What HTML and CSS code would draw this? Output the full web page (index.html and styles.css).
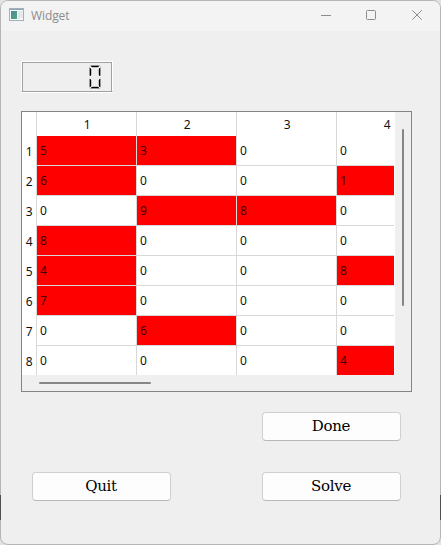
FILE: index.html
```
<!DOCTYPE html>
<html lang="en">
<head>
<meta charset="utf-8">
<title>Widget</title>
<link rel="stylesheet" href="styles.css">
</head>
<body>
<div class="backdrop">
<div class="window">
  <header class="titlebar">
    <svg class="app-icon" width="16" height="14" viewBox="0 0 16 14">
      <defs><linearGradient id="g" x1="0" y1="0" x2="1" y2="1"><stop offset="0" stop-color="#4b8a9c"/><stop offset="1" stop-color="#52a480"/></linearGradient></defs>
      <rect x=".5" y=".5" width="14" height="12" fill="#f8fafa" stroke="#a3b0b8"/>
      <path d="M1 1h13v1H1z" fill="#8ba5b6"/>
      <path d="M2 3h6v8H2z" fill="url(#g)"/>
      <path d="M9 3h2v8H9z" fill="#dce6e8"/><path d="M11 3h3v7h-3z" fill="#e4e9ec"/>
    </svg>
    <h1 class="title">Widget</h1>
    <svg class="controls" width="104" height="12" viewBox="0 0 104 12" fill="none" stroke="#8c8c8c">
      <path d="M0 6.5h10"/>
      <rect x="45.5" y="1.5" width="9" height="9" rx="1"/>
      <path d="M91.3 1.3l9.4 9.4M100.7 1.3l-9.4 9.4"/>
    </svg>
  </header>
  <main class="content">
    <div class="lcd">
      <svg width="12" height="24" viewBox="0 0 12 24">
        <path d="M1 .5h10M.5 1.5v9M.5 13.5v9M11.5 1.5v9M11.5 13.5v9M1 23.5h10" stroke="#bbb" fill="none"/>
        <path d="M2 1h8l-1 1H3zM3 22h6l1 1H2zM1 3l1 1v6l-1 1zM11 3l-1 1v6l1 1zM1 14l1 1v6l-1 1zM11 14l-1 1v6l1 1z" fill="#000" stroke="#000" stroke-width=".4"/>
      </svg>
    </div>
    <div class="table-frame">
      <div class="viewport">
        <table class="grid">
          <thead><tr><th class="rh"></th><th>1</th><th>2</th><th>3</th><th>4</th></tr></thead>
          <tbody>
            <tr><th class="rh">1</th><td class="fixed">5</td><td class="fixed">3</td><td>0</td><td>0</td></tr>
            <tr><th class="rh">2</th><td class="fixed">6</td><td>0</td><td>0</td><td class="fixed">1</td></tr>
            <tr><th class="rh">3</th><td>0</td><td class="fixed">9</td><td class="fixed">8</td><td>0</td></tr>
            <tr><th class="rh">4</th><td class="fixed">8</td><td>0</td><td>0</td><td>0</td></tr>
            <tr><th class="rh">5</th><td class="fixed">4</td><td>0</td><td>0</td><td class="fixed">8</td></tr>
            <tr><th class="rh">6</th><td class="fixed">7</td><td>0</td><td>0</td><td>0</td></tr>
            <tr><th class="rh">7</th><td>0</td><td class="fixed">6</td><td>0</td><td>0</td></tr>
            <tr><th class="rh">8</th><td>0</td><td>0</td><td>0</td><td class="fixed">4</td></tr>
          </tbody>
        </table>
      </div>
      <div class="vbar"><div class="vthumb"></div></div>
      <div class="hbar"><div class="hthumb"></div></div>
    </div>
    <div class="buttons">
      <button class="btn done">Done</button>
      <button class="btn quit">Quit</button>
      <button class="btn solve">Solve</button>
    </div>
  </main>
</div>
</div>
</body>
</html>
```
FILE: styles.css
```
* { box-sizing: border-box; }
body { margin: 0; overflow: hidden; font-family: "Open Sans", "Noto Sans", sans-serif; }
.backdrop {
  position: relative;
  width: 441px;
  height: 545px;
  background: #e2e2e2;
}
.window {
  height: 545px;
  border: 1px solid #b5b5b5;
  border-radius: 8px;
  background: #efefef;
  overflow: hidden;
}
/* dark strip of the desktop showing at both window edges */
.backdrop::after {
  content: "";
  position: absolute;
  top: 495px;
  left: 0;
  right: 0;
  height: 25px;
  border: 0 solid #505050;
  border-width: 0 1px;
}
.titlebar {
  height: 30px;
  background: #f3f3f3;
  display: flex;
  align-items: center;
  padding-left: 8px;
}
.app-icon { margin: 0 6px 2px 0; }
.title { margin: 0; flex: 1; font-size: 12px; font-weight: 400; color: #8c8c8c; letter-spacing: -0.1px; line-height: 16px; }
.controls { margin: 0 15px 2px 0; }
.content { padding: 30px 27px 0 20px; }
.lcd {
  width: 92px;
  height: 31px;
  border: 1px solid;
  border-color: #fff #fff #a0a0a0 #fff;
  box-shadow: inset 1px 1px #a0a0a0, inset -1px 0 #a0a0a0, 0 1px #fff;
  display: flex;
  justify-content: flex-end;
  padding: 3px 11px 0 0;
}
.table-frame {
  margin-top: 19px;
  width: 391px;
  height: 281px;
  border: 1px solid #828588;
  display: grid;
  grid-template-columns: 373px 16px;
  grid-template-rows: 263px 16px;
}
.viewport { overflow: hidden; background: #fff; border-right: 1px solid #fff; }
.grid { table-layout: fixed; width: 415px; border-collapse: separate; border-spacing: 0; font-family: "Noto Sans", sans-serif; font-size: 12px; letter-spacing: -0.4px; color: #111; }
.grid th, .grid td { padding: 0; font-weight: 400; border-right: 1px solid #d8d8d8; }
.grid thead th { height: 24px; line-height: 22px; padding: 1px 0 0 1px; }
.grid tbody th, .grid tbody td { height: 30px; line-height: 28px; }
.grid .rh { width: 15px; text-align: center; padding-top: 1px; }
.grid tbody td { padding-left: 3px; border-bottom: 1px solid #d8d8d8; text-align: left; }
.grid .fixed { background: #f00; color: #400000; }
.vbar { padding: 17px 0 0 7px; }
.vthumb { width: 2px; height: 177px; background: #868686; border-radius: 1px; }
.hbar { padding: 7px 0 0 17px; }
.hthumb { width: 112px; height: 2px; background: #868686; border-radius: 1px; }
.buttons {
  display: grid;
  grid-template-columns: 139px 139px;
  grid-template-rows: 29px 29px;
  column-gap: 91px;
  row-gap: 31px;
  margin: 20px 0 0 11px;
}
.btn {
  padding: 0 1px 0 0;
  border: 1px solid #d0d0d0;
  border-bottom-color: #b8b8b8;
  border-radius: 4px;
  background: #fdfdfd;
  color: #000;
  font: 15px/27px "DejaVu Serif", serif;
  letter-spacing: -0.3px;
}
.done, .solve { grid-column: 2; }
```
